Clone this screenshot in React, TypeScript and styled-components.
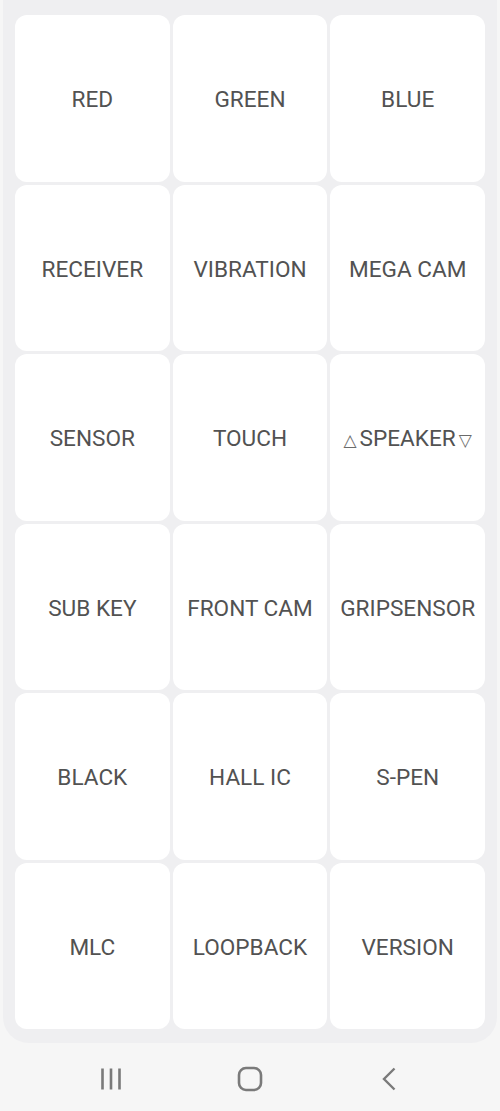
import React from "react";
import styled, { createGlobalStyle } from "styled-components";

const Global = createGlobalStyle`
  html, body { margin: 0; padding: 0; background: #f6f6f6; }
  body { font-family: Roboto, "Noto Sans", sans-serif; }
`;

const Screen = styled.div`
  width: 500px;
  height: 1111px;
  display: flex;
  flex-direction: column;
  background: #f6f6f6;
  overflow: hidden;
`;

const Panel = styled.div`
  margin: 0 3px 0 3px;
  padding: 15px 12px 14px 12px;
  background: #efeff1;
  border-radius: 0 0 26px 26px;
`;

const Grid = styled.div`
  display: grid;
  grid-template-columns: repeat(3, 1fr);
  grid-auto-rows: 166.5px;
  gap: 3px;
`;

const Tile = styled.button`
  border: none;
  margin: 0;
  padding: 3px 0 0 0;
  background: #ffffff;
  border-radius: 12px;
  display: flex;
  align-items: center;
  justify-content: center;
  font-family: Roboto, sans-serif;
  font-weight: 400;
  font-size: 22.6px;
  color: #525252;
  letter-spacing: 0;
  white-space: nowrap;
`;

const Arrow = styled.span`
  font-family: "DejaVu Sans", sans-serif;
  font-size: 17px;
  color: #6a6a6a;
  margin: 0 3px;
  position: relative;
  top: 1px;
`;

const NavBar = styled.div`
  flex: 1;
  display: grid;
  grid-template-columns: repeat(3, 1fr);
  align-items: center;
  padding: 4px 41.5px 0 41.5px;
  justify-items: center;
`;

const NavBtn = styled.div`
  width: 40px;
  height: 40px;
  display: flex;
  align-items: center;
  justify-content: center;
`;

const labels = [
  "RED", "GREEN", "BLUE",
  "RECEIVER", "VIBRATION", "MEGA CAM",
  "SENSOR", "TOUCH", "SPEAKER",
  "SUB KEY", "FRONT CAM", "GRIPSENSOR",
  "BLACK", "HALL IC", "S-PEN",
  "MLC", "LOOPBACK", "VERSION",
];

export default function App() {
  return (
    <>
      <Global />
      <Screen>
        <Panel>
          <Grid>
            {labels.map((l) =>
              l === "SPEAKER" ? (
                <Tile key={l}>
                  <Arrow>△</Arrow>SPEAKER<Arrow>▽</Arrow>
                </Tile>
              ) : (
                <Tile key={l}>{l}</Tile>
              )
            )}
          </Grid>
        </Panel>
        <NavBar>
          <NavBtn>
            <svg width="22" height="22" viewBox="0 0 22 22">
              <g stroke="#7a7a7a" strokeWidth="2.6" strokeLinecap="butt">
                <line x1="2.5" y1="0.5" x2="2.5" y2="21.5" />
                <line x1="11" y1="0.5" x2="11" y2="21.5" />
                <line x1="19.5" y1="0.5" x2="19.5" y2="21.5" />
              </g>
            </svg>
          </NavBtn>
          <NavBtn>
            <svg width="26" height="26" viewBox="0 0 26 26">
              <rect x="2" y="2" width="22" height="22" rx="7" fill="none" stroke="#7a7a7a" strokeWidth="2.6" />
            </svg>
          </NavBtn>
          <NavBtn>
            <svg width="24" height="24" viewBox="0 0 24 24">
              <polyline points="17.5,1.5 7,12 17.5,22.5" fill="none" stroke="#7a7a7a" strokeWidth="2.4" strokeLinejoin="miter" />
            </svg>
          </NavBtn>
        </NavBar>
      </Screen>
    </>
  );
}
